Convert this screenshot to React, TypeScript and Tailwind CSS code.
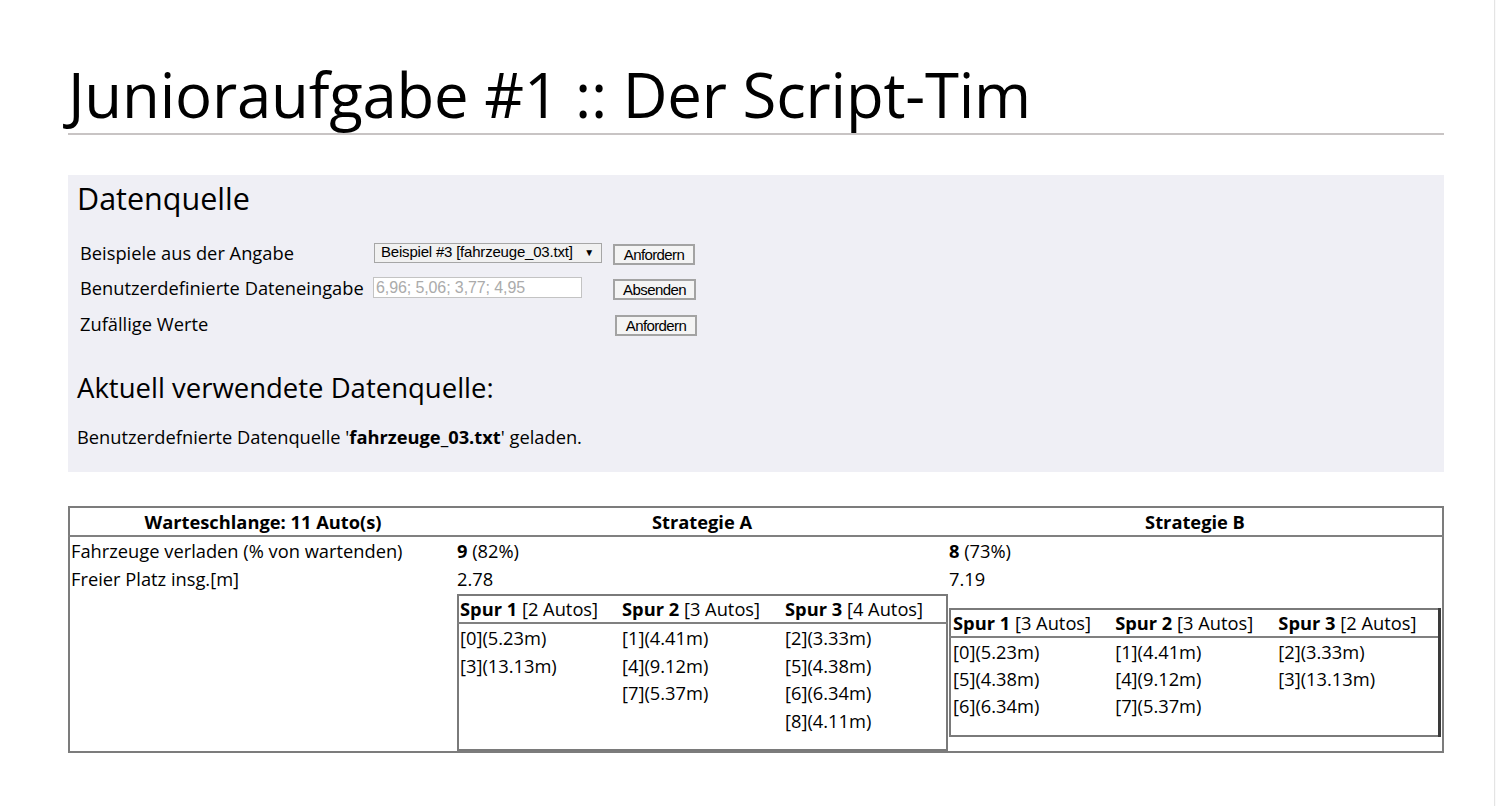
import React from "react";

type Lane = { title: string; count: string; cars: string[] };

const strategyA: Lane[] = [
  { title: "Spur 1", count: "[2 Autos]", cars: ["[0](5.23m)", "[3](13.13m)"] },
  { title: "Spur 2", count: "[3 Autos]", cars: ["[1](4.41m)", "[4](9.12m)", "[7](5.37m)"] },
  { title: "Spur 3", count: "[4 Autos]", cars: ["[2](3.33m)", "[5](4.38m)", "[6](6.34m)", "[8](4.11m)"] },
];

const strategyB: Lane[] = [
  { title: "Spur 1", count: "[3 Autos]", cars: ["[0](5.23m)", "[5](4.38m)", "[6](6.34m)"] },
  { title: "Spur 2", count: "[3 Autos]", cars: ["[1](4.41m)", "[4](9.12m)", "[7](5.37m)"] },
  { title: "Spur 3", count: "[2 Autos]", cars: ["[2](3.33m)", "[3](13.13m)"] },
];

function LaneTable({ lanes, className }: { lanes: Lane[]; className: string }) {
  const rows = Math.max(...lanes.map((l) => l.cars.length));
  return (
    <table className={`w-full border-collapse table-fixed ${className}`}>
      <thead>
        <tr className="border-b-2 border-[#808080]">
          {lanes.map((l) => (
            <th key={l.title} className="text-left font-normal px-0 h-[26px] leading-[26px]">
              <b className="font-bold">{l.title}</b> {l.count}
            </th>
          ))}
        </tr>
      </thead>
      <tbody>
        {Array.from({ length: rows }).map((_, i) => (
          <tr key={i}>
            {lanes.map((l) => (
              <td key={l.title} className="h-[27.5px] leading-[27px] p-0 align-middle">
                {l.cars[i] ?? ""}
              </td>
            ))}
          </tr>
        ))}
        <tr>
          <td className="h-[16px]" colSpan={3}></td>
        </tr>
      </tbody>
    </table>
  );
}

function Btn({ children, className = "" }: { children: React.ReactNode; className?: string }) {
  return (
    <button
      className={`h-[21px] px-0 border-2 border-[#a3a3a3] bg-[#f4f4f4] font-['Liberation_Sans',Arial,sans-serif] text-[15px] leading-[15px] tracking-[-0.6px] text-black ${className}`}
    >
      {children}
    </button>
  );
}

export default function App() {
  return (
    <div className="flex min-h-[806px] w-full bg-white font-['Open_Sans',sans-serif] text-black">
      <main className="flex-1 pl-[68px] pr-[50px]">
        <h1 className="mt-[57px] text-[61.7px] leading-[74px] font-normal tracking-[-0.2px]">
          Junioraufgabe #1 :: Der Script-Tim
        </h1>
        <div className="mt-[2px] h-[2px] bg-[#c8c4c4]" />

        <section className="mt-[40px] bg-[#efeff5] pl-[9px] pt-[5px] pb-[23px]">
          <h2 className="text-[30.5px] leading-[36px] font-normal">Datenquelle</h2>

          <div className="mt-[19px] ml-[3px] grid grid-cols-[293px_240px_auto] items-center text-[18.3px]">
            <div className="h-[35px] flex items-center">Beispiele aus der Angabe</div>
            <div className="flex items-center">
              <div className="ml-[1px] w-[228px] h-[20px] flex items-center justify-between border border-[#a6a6a6] bg-[#f1f1f1] pl-[6px] pr-[7px] font-['Liberation_Sans',Arial,sans-serif] text-[15px] tracking-[-0.2px]">
                <span>Beispiel #3 [fahrzeuge_03.txt]</span>
                <span className="text-[10px]">▼</span>
              </div>
            </div>
            <div>
              <Btn className="w-[82px]">Anfordern</Btn>
            </div>

            <div className="h-[35px] flex items-center">Benutzerdefinierte Dateneingabe</div>
            <div className="flex items-center">
              <input
                className="w-[209px] h-[21px] border border-[#c3c3c3] bg-white px-[2px] font-['Liberation_Sans',Arial,sans-serif] text-[16px] tracking-[-0.1px] placeholder:text-[#ababab] outline-none"
                placeholder="6,96; 5,06; 3,77; 4,95"
              />
            </div>
            <div>
              <Btn className="w-[83px]">Absenden</Btn>
            </div>

            <div className="h-[38px] flex items-center">Zufällige Werte</div>
            <div />
            <div>
              <Btn className="w-[82px] ml-[2px]">Anfordern</Btn>
            </div>
          </div>

          <h3 className="mt-[29px] text-[27.5px] leading-[32px] font-normal">
            Aktuell verwendete Datenquelle:
          </h3>
          <p className="mt-[21px] text-[18.3px] leading-[24px]">
            Benutzerdefnierte Datenquelle '<b className="font-bold">fahrzeuge_03.txt</b>' geladen.
          </p>
        </section>

        <table className="mt-[34px] w-full border-collapse table-fixed border-2 border-[#7c7c7c] text-[18.3px]">
          <colgroup>
            <col className="w-[387px]" />
            <col className="w-[492px]" />
            <col />
          </colgroup>
          <thead>
            <tr className="border-b-2 border-[#808080]">
              <th className="h-[29px] font-bold text-center">Warteschlange: 11 Auto(s)</th>
              <th className="font-bold text-center">Strategie A</th>
              <th className="font-bold text-center">Strategie B</th>
            </tr>
          </thead>
          <tbody>
            <tr>
              <td className="h-[28px] pl-[1px]">Fahrzeuge verladen (% von wartenden)</td>
              <td className="pl-[1px]">
                <b className="font-bold">9</b> (82%)
              </td>
              <td className="pl-[1px]">
                <b className="font-bold">8</b> (73%)
              </td>
            </tr>
            <tr>
              <td className="h-[26px] pl-[1px] pb-[1px]">Freier Platz insg.[m]</td>
              <td className="pl-[1px] pb-[1px]">2.78</td>
              <td className="pl-[1px] pb-[1px]">7.19</td>
            </tr>
            <tr>
              <td />
              <td className="p-0 pl-[1px] pt-[1px] align-middle">
                <LaneTable lanes={strategyA} className="border-2 border-[#7a7a7a] [&_th]:pl-[1px] [&_td]:pl-[1px]" />
              </td>
              <td className="p-0 pl-[1px] pr-[1px] align-middle">
                <LaneTable
                  lanes={strategyB}
                  className="border-2 border-[#7a7a7a] border-r-[3px] border-r-[#3a3a3a] [&_th]:pl-[2px] [&_td]:pl-[2px]"
                />
              </td>
            </tr>
          </tbody>
        </table>
      </main>
      <div className="w-[2px] border-l border-[#e4e4e4] bg-[#fafafa]" />
    </div>
  );
}
